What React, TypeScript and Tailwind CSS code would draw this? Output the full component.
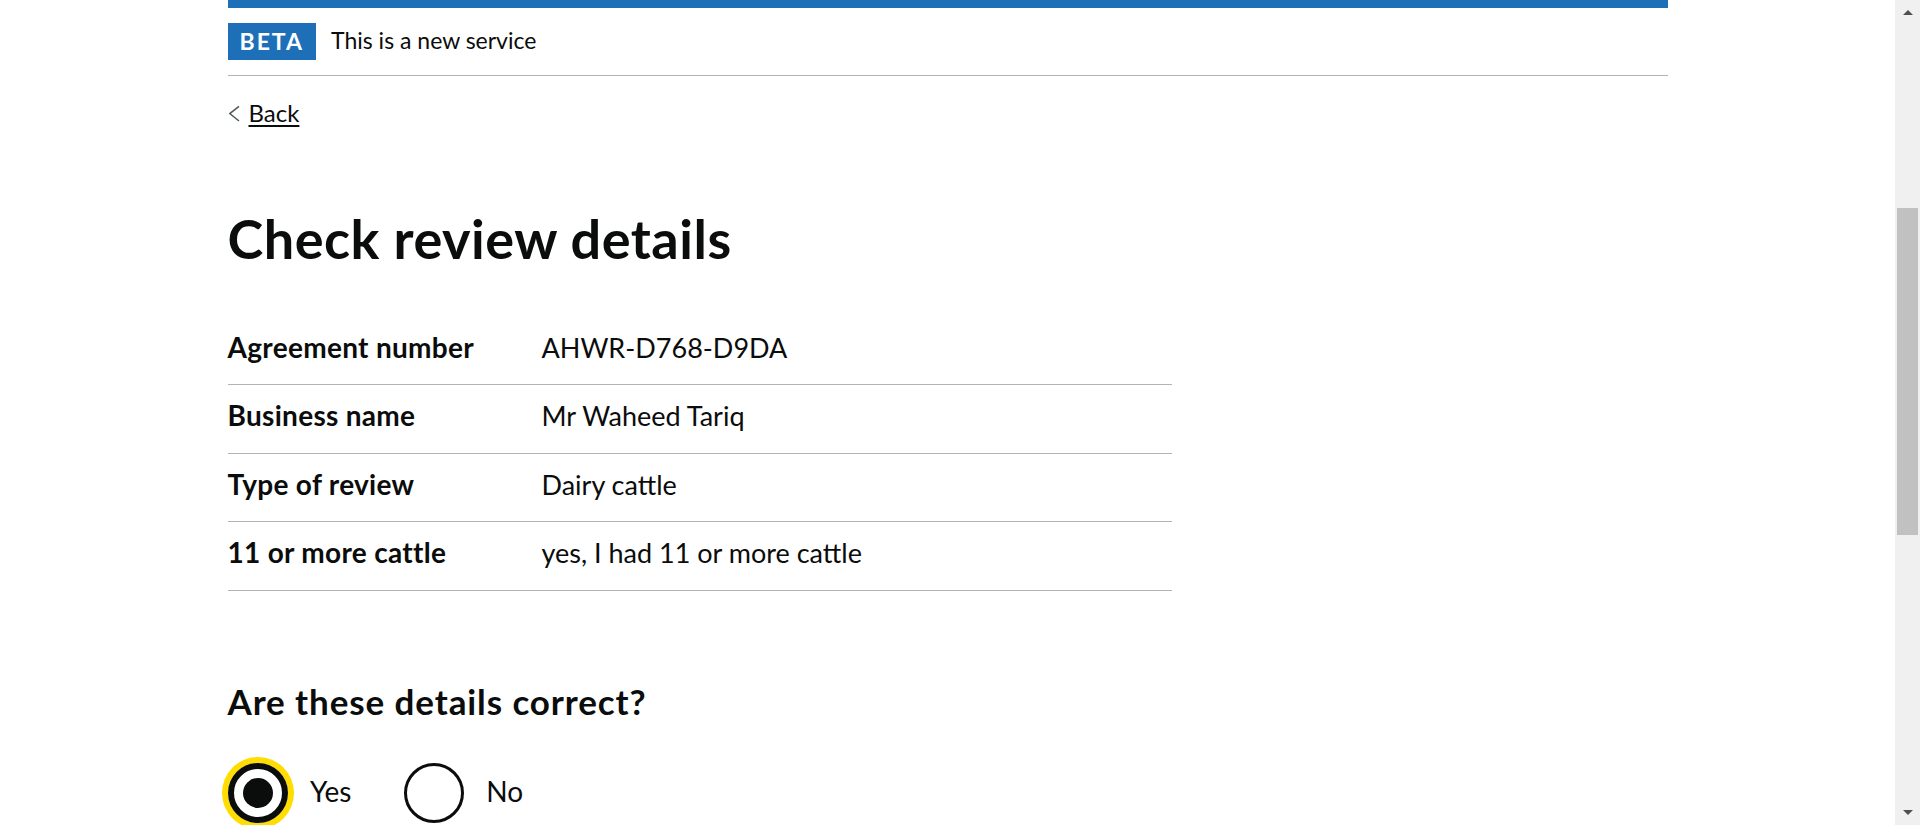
import React from "react";

const rows = [
  { key: "Agreement number", value: "AHWR-D768-D9DA" },
  { key: "Business name", value: "Mr Waheed Tariq" },
  { key: "Type of review", value: "Dairy cattle" },
  { key: "11 or more cattle", value: "yes, I had 11 or more cattle" },
];

function Radio({ label, checked }: { label: string; checked?: boolean }) {
  return (
    <div className="mr-[30px] flex items-start">
      {checked ? (
        <div className="flex h-[60px] w-[60px] items-center justify-center rounded-full border-[6px] border-[#0b0c0c] shadow-[0_0_0_6px_#ffdd00]">
          <div className="h-[30px] w-[30px] rounded-full bg-[#0b0c0c]" />
        </div>
      ) : (
        <div className="h-[60px] w-[60px] rounded-full border-[3px] border-[#0b0c0c]" />
      )}
      <span className="px-[22.5px] pt-[10.5px] text-[28px] leading-[37.5px]">{label}</span>
    </div>
  );
}

function Scrollbar() {
  return (
    <div className="flex w-[25px] shrink-0 flex-col bg-[#f0f0f0]">
      <div className="flex h-[25px] items-center justify-center">
        <svg width="12" height="7" viewBox="0 0 12 7">
          <polygon points="1,6 6,1 11,6" fill="#505050" />
        </svg>
      </div>
      <div className="flex-1 px-[2px] pt-[183px]">
        <div className="h-[327px] bg-[#c1c1c1]" />
      </div>
      <div className="flex h-[25px] items-center justify-center">
        <svg width="12" height="7" viewBox="0 0 12 7">
          <polygon points="1,1 6,6 11,1" fill="#505050" />
        </svg>
      </div>
    </div>
  );
}

export default function App() {
  return (
    <div className="flex h-[825px] w-full overflow-hidden bg-white font-['Lato',sans-serif] text-[#0b0c0c]">
      <div className="min-w-0 flex-1">
        <div className="mx-auto w-[1440px]">
          {/* header border + phase banner */}
          <div className="h-[7.5px] bg-[#1d70b8]" />
          <div className="flex items-start gap-[15px] border-b-[1.5px] border-[#b1b4b6] py-[15px]">
            <strong className="flex h-[37px] items-center bg-[#1d70b8] px-[12px] text-[23px] leading-none font-bold tracking-[2px] text-white">
              BETA
            </strong>
            <span className="pt-[2px] text-[23px] leading-[30px]">This is a new service</span>
          </div>

          {/* back link */}
          <a href="#" className="mt-[22px] flex w-max items-center text-[24px] leading-[30px] text-[#0b0c0c]">
            <svg width="21" height="30" viewBox="0 0 21 30" className="shrink-0">
              <polyline points="11,8.3 1.8,15.6 11,23" fill="none" stroke="#505a5f" strokeWidth="1.5" />
            </svg>
            <span className="underline decoration-[1.5px] underline-offset-[3px]">Back</span>
          </a>

          <h1 className="mt-[81px] mb-[48px] text-[54px] leading-[60px] font-bold tracking-[0.5px]">Check review details</h1>

          {/* summary list */}
          <dl className="w-[944px]">
            {rows.map((r) => (
              <div key={r.key} className="grid grid-cols-[314px_1fr] border-b border-[#b1b4b6] pt-[12px] pb-[18px] text-[27px] leading-[37.5px]">
                <dt className="text-[28px] font-bold tracking-[0.3px]">{r.key}</dt>
                <dd>{r.value}</dd>
              </div>
            ))}
          </dl>

          <fieldset className="mt-[88px]">
            <legend className="text-[35px] leading-[45px] font-bold tracking-[0.9px]">Are these details correct?</legend>
            <div className="mt-[39px] flex">
              <Radio label="Yes" checked />
              <Radio label="No" />
            </div>
          </fieldset>
        </div>
      </div>
      <Scrollbar />
    </div>
  );
}
